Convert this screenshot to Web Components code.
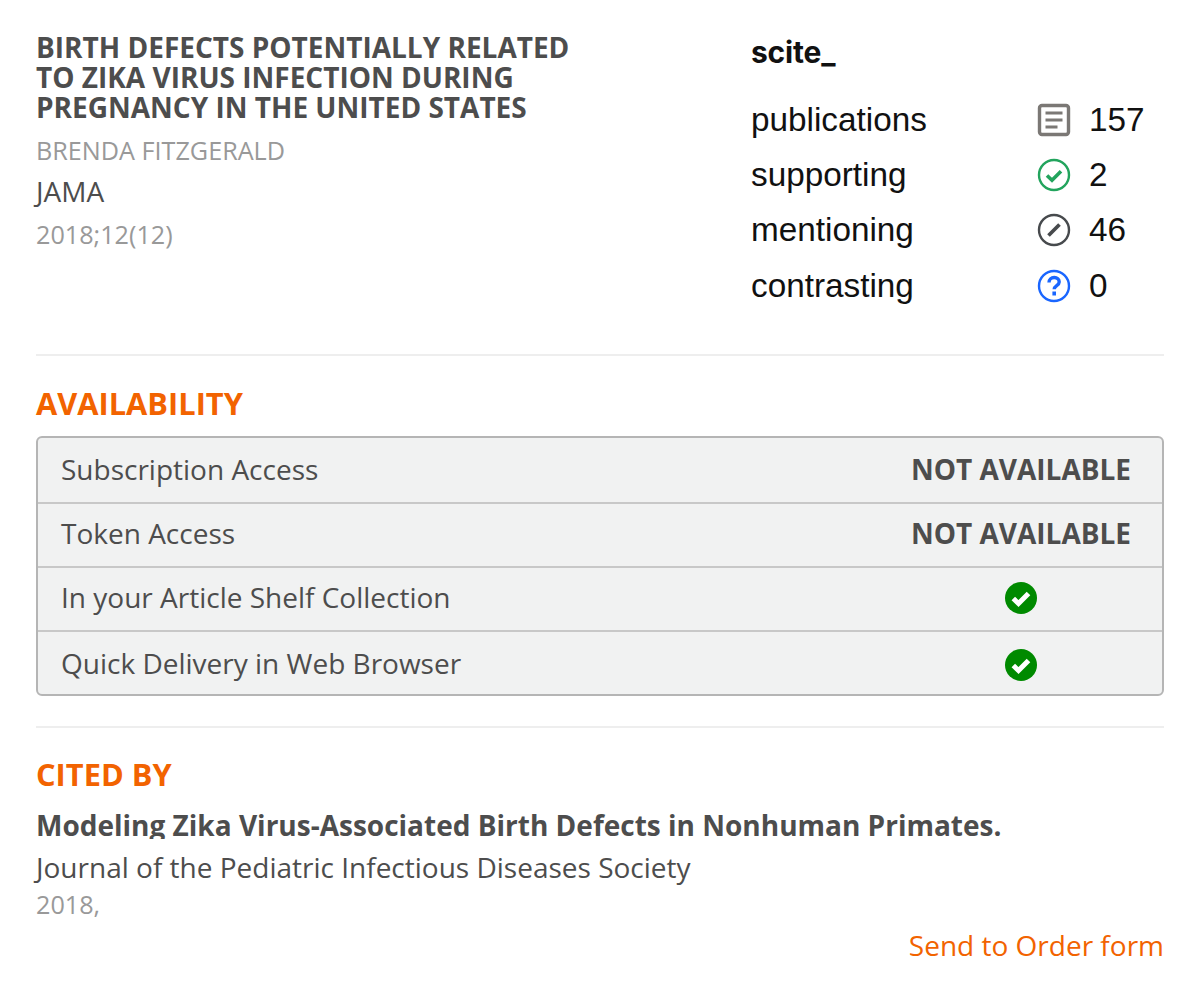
<!DOCTYPE html>
<html lang="en">
<head>
<meta charset="utf-8">
<title>Article availability</title>
<style>
  html, body { margin: 0; background: #fff; }
  body { font-family: "Open Sans", sans-serif; color: #4d4d4d; }
</style>
</head>
<body>
<order-panel>
  <article-summary journal="JAMA" author="BRENDA FITZGERALD" issue="2018;12(12)">
    BIRTH DEFECTS POTENTIALLY RELATED<br>TO ZIKA VIRUS INFECTION DURING<br>PREGNANCY IN THE UNITED STATES
  </article-summary>
  <section-block label="AVAILABILITY">
    <avail-table>
      <avail-row label="Subscription Access" status="NOT AVAILABLE"></avail-row>
      <avail-row label="Token Access" status="NOT AVAILABLE"></avail-row>
      <avail-row label="In your Article Shelf Collection" check></avail-row>
      <avail-row label="Quick Delivery in Web Browser" check></avail-row>
    </avail-table>
  </section-block>
  <section-block label="CITED BY" last>
    <cited-item title="Modeling Zika Virus-Associated Birth Defects in Nonhuman Primates." journal="Journal of the Pediatric Infectious Diseases Society" year="2018,"></cited-item>
  </section-block>
</order-panel>

<script>
// outer box of the page
class OrderPanel extends HTMLElement {
  constructor() {
    super();
    this.attachShadow({ mode: 'open' });
    this.shadowRoot.innerHTML = `
      <style>
        :host { display: block; box-sizing: border-box; width: 1200px; height: 990px; padding: 31px 36px 0; overflow: hidden; }
      </style>
      <slot></slot>
    `;
  }
}

// title block on the left, scite numbers on the right
class ArticleSummary extends HTMLElement {
  constructor() {
    super();
    this.attachShadow({ mode: 'open' });
    this.shadowRoot.innerHTML = `
      <style>
        :host { display: flex; justify-content: space-between; height: 323px; border-bottom: 2px solid #eee; }
        .title { font-size: 28px; line-height: 29.8px; font-weight: 700; color: #4d4d4d; margin-top: 2px; }
        .author { font-size: 25.2px; line-height: 30px; color: #999; margin-top: 13px; }
        .journal { font-size: 28px; line-height: 34px; color: #4d4d4d; margin-top: 9px; }
        .issue { font-size: 25.2px; line-height: 30px; color: #999; margin-top: 11px; }
      </style>
      <div>
        <div class="title"><slot></slot></div>
        <div class="author">${this.getAttribute('author')}</div>
        <div class="journal">${this.getAttribute('journal')}</div>
        <div class="issue">${this.getAttribute('issue')}</div>
      </div>
      <scite-badge></scite-badge>
    `;
  }
}

class SciteBadge extends HTMLElement {
  constructor() {
    super();
    this.attachShadow({ mode: 'open' });
    this.shadowRoot.innerHTML = `
      <style>
        :host { display: block; width: 413px; font-family: "Liberation Sans", sans-serif; color: #111; }
        .logo { font-family: "Inter", "Liberation Sans", sans-serif; font-size: 30px; line-height: 40px; font-weight: 700; margin-top: 1px; letter-spacing: -0.2px; }
        .rows { display: grid; grid-template-columns: 286px 32px auto; grid-auto-rows: 55.4px; margin-top: 20px; align-items: center; font-size: 33.300px; }
        .rows span { line-height: 40px; }
        svg { display: block; width: 34px; height: 34px; }
        .num { padding-left: 20px; }
      </style>
      <div class="logo">scite_</div>
      <div class="rows">
        <span>publications</span>
        <svg viewBox="0 0 34 34" fill="none" stroke="#7b7875"><rect x="2.5" y="2.5" width="29" height="29" rx="2.5" stroke-width="3.4"/><path d="M8.500 10h17M8.500 17h17M8.500 24h12" stroke-width="3"/></svg>
        <span class="num">157</span>
        <span>supporting</span>
        <svg viewBox="0 0 34 34" fill="none" stroke="#22a45d"><circle cx="17" cy="17" r="15" stroke-width="2.4"/><path d="M10 17.500l5 4.800 9-9" stroke-width="3.600"/></svg>
        <span class="num">2</span>
        <span>mentioning</span>
        <svg viewBox="0 0 34 34" fill="none" stroke="#474a4d"><circle cx="17" cy="17" r="15" stroke-width="2.400"/><path d="M11.500 22.500l11-11" stroke-width="3.800"/></svg>
        <span class="num">46</span>
        <span>contrasting</span>
        <svg viewBox="0 0 34 34" fill="none" stroke="#1a66ff"><circle cx="17" cy="17" r="15" stroke-width="2.400"/><path d="M12 13.500c0-3 2.200-5 5.200-5s5 1.900 5 4.400c0 3.800-5 3.600-5 7.400" stroke-width="3.400"/><path d="M17.200 22.500v4" stroke-width="3.600"/></svg>
        <span class="num">0</span>
      </div>
    `;
  }
}

// orange heading and whatever goes under it
class SectionBlock extends HTMLElement {
  constructor() {
    super();
    this.attachShadow({ mode: 'open' });
    const last = this.hasAttribute('last');
    this.shadowRoot.innerHTML = `
      <style>
        :host { display: block; height: ${last ? 'auto' : '370px'}; ${last ? '' : 'border-bottom: 2px solid #eee;'} }
        h2 { margin: 0; padding-top: ${last ? '26px' : '27px'}; font-size: 30.800px; line-height: 40px; font-weight: 700; color: #f26300; }
        .body { margin-top: 13px; }
      </style>
      <h2>${this.getAttribute('label')}</h2>
      <div class="body"><slot></slot></div>
    `;
  }
}

class AvailTable extends HTMLElement {
  constructor() {
    super();
    this.attachShadow({ mode: 'open' });
    this.shadowRoot.innerHTML = `
      <style>
        :host { display: block; box-sizing: border-box; height: 260px; background: #f1f2f2; border: 2px solid #b5b5b5; border-radius: 6px; overflow: hidden; }
      </style>
      <slot></slot>
    `;
  }
}

class AvailRow extends HTMLElement {
  constructor() {
    super();
    this.attachShadow({ mode: 'open' });
    const right = this.hasAttribute('check')
      ? `<svg viewBox="0 0 32 32"><circle cx="16" cy="16" r="16" fill="#008a00"/><path d="M8.300 16.500l5.200 5 10-10" fill="none" stroke="#fff" stroke-width="5"/></svg>`
      : `<b>${this.getAttribute('status')}</b>`;
    this.shadowRoot.innerHTML = `
      <style>
        :host { display: flex; justify-content: space-between; align-items: center; box-sizing: border-box; height: 64px; padding-left: 23px; border-bottom: 2px solid #c8c8c8; font-size: 28px; color: #4d4d4d; white-space: nowrap; }
        :host(:first-child) { height: 66px; }
        :host(:last-child) { border-bottom: 0; height: 62px; }
        .label { margin-bottom: 4px; }
        :host(:first-child) .label { margin-bottom: 2px; }
        :host(:last-child) .label { margin-bottom: 0; }
        .right { width: 220px; margin-right: 31px; display: flex; justify-content: center; }
        :host(:nth-child(2)) .right { margin-bottom: 4px; }
        :host(:first-child) .right { margin-bottom: 2px; }
        :host(:nth-child(3)) svg { margin-bottom: 2px; }
        :host(:last-child) svg { margin-top: 4px; }
        b { font-weight: 700; }
        svg { display: block; width: 32px; height: 32px; }
      </style>
      <span class="label">${this.getAttribute('label')}</span>
      <div class="right">${right}</div>
    `;
  }
}

class CitedItem extends HTMLElement {
  constructor() {
    super();
    this.attachShadow({ mode: 'open' });
    this.shadowRoot.innerHTML = `
      <style>
        :host { display: block; }
        .title { height: 32px; overflow: hidden; font-size: 28px; line-height: 36px; font-weight: 700; color: #4d4d4d; }
        .journal { font-size: 28px; line-height: 36px; color: #4d4d4d; margin-top: 10px; }
        .year { font-size: 25.200px; line-height: 30px; color: #999; margin-top: 4px; }
        .send { display: flex; justify-content: flex-end; margin-top: 8px; }
        a { font-size: 28px; line-height: 36px; color: #f26300; text-decoration: none; }
      </style>
      <div class="title">${this.getAttribute('title')}</div>
      <div class="journal">${this.getAttribute('journal')}</div>
      <div class="year">${this.getAttribute('year')}</div>
      <div class="send"><a href="#">Send to Order form</a></div>
    `;
  }
}

customElements.define('order-panel', OrderPanel);
customElements.define('article-summary', ArticleSummary);
customElements.define('scite-badge', SciteBadge);
customElements.define('section-block', SectionBlock);
customElements.define('avail-table', AvailTable);
customElements.define('avail-row', AvailRow);
customElements.define('cited-item', CitedItem);
</script>
</body>
</html>
